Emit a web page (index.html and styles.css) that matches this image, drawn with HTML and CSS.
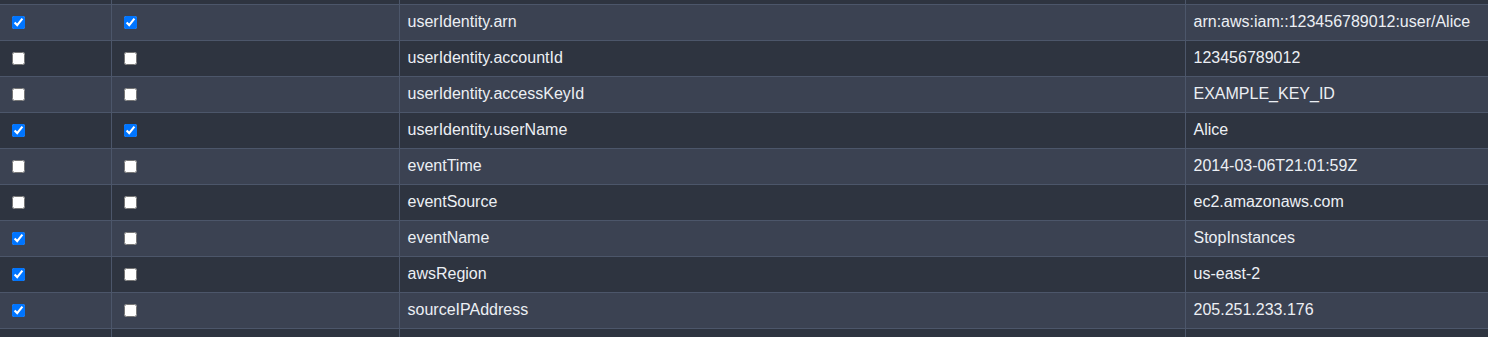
FILE: index.html
```html
<!DOCTYPE html>
<html lang="en">
<head>
<meta charset="utf-8">
<title>Event fields</title>
<link rel="stylesheet" href="styles.css">
</head>
<body>
<table class="fields">
  <colgroup>
    <col class="c-a"><col class="c-b"><col class="c-key"><col class="c-val">
  </colgroup>
  <tbody>
    <tr class="sliver dark"><td></td><td></td><td></td><td></td></tr>
    <tr class="light"><td><input type="checkbox" checked></td><td><input type="checkbox" checked></td><td>userIdentity.arn</td><td>arn:aws:iam::123456789012:user/Alice</td></tr>
    <tr class="dark"><td><input type="checkbox"></td><td><input type="checkbox"></td><td>userIdentity.accountId</td><td>123456789012</td></tr>
    <tr class="light"><td><input type="checkbox"></td><td><input type="checkbox"></td><td>userIdentity.accessKeyId</td><td>EXAMPLE_KEY_ID</td></tr>
    <tr class="dark"><td><input type="checkbox" checked></td><td><input type="checkbox" checked></td><td>userIdentity.userName</td><td>Alice</td></tr>
    <tr class="light"><td><input type="checkbox"></td><td><input type="checkbox"></td><td>eventTime</td><td>2014-03-06T21:01:59Z</td></tr>
    <tr class="dark"><td><input type="checkbox"></td><td><input type="checkbox"></td><td>eventSource</td><td>ec2.amazonaws.com</td></tr>
    <tr class="light"><td><input type="checkbox" checked></td><td><input type="checkbox"></td><td>eventName</td><td>StopInstances</td></tr>
    <tr class="dark"><td><input type="checkbox" checked></td><td><input type="checkbox"></td><td>awsRegion</td><td>us-east-2</td></tr>
    <tr class="light"><td><input type="checkbox" checked></td><td><input type="checkbox"></td><td>sourceIPAddress</td><td>205.251.233.176</td></tr>
    <tr class="tail dark"><td></td><td></td><td></td><td></td></tr>
  </tbody>
</table>
</body>
</html>
```

FILE: styles.css
```css
html, body {
  margin: 0;
  padding: 0;
  background: #2e3440;
  overflow: hidden;
}

.fields {
  width: 1488px;
  table-layout: fixed;
  border-collapse: collapse;
  font-family: "Liberation Sans", Arial, sans-serif;
  font-size: 16px;
  color: #eceff4;
}

.c-a { width: 111px; }
.c-b { width: 288px; }
.c-key { width: 786px; }
.c-val { width: 303px; }

.fields td {
  height: 36px;
  padding: 0 8px;
  border-bottom: 1px solid #4c566a;
  border-right: 1px solid #4c566a;
  vertical-align: middle;
  white-space: nowrap;
  box-sizing: border-box;
}

.fields tr td:last-child {
  border-right: none;
}

.fields tr.sliver td {
  height: 4px;
  padding: 0;
}

.fields tr.tail td {
  height: 36px;
}

.light { background: #3b4252; }
.dark { background: #2e3440; }

.fields input[type="checkbox"] {
  width: 13px;
  height: 13px;
  margin: 3px 3px 3px 4px;
  vertical-align: middle;
}
```
